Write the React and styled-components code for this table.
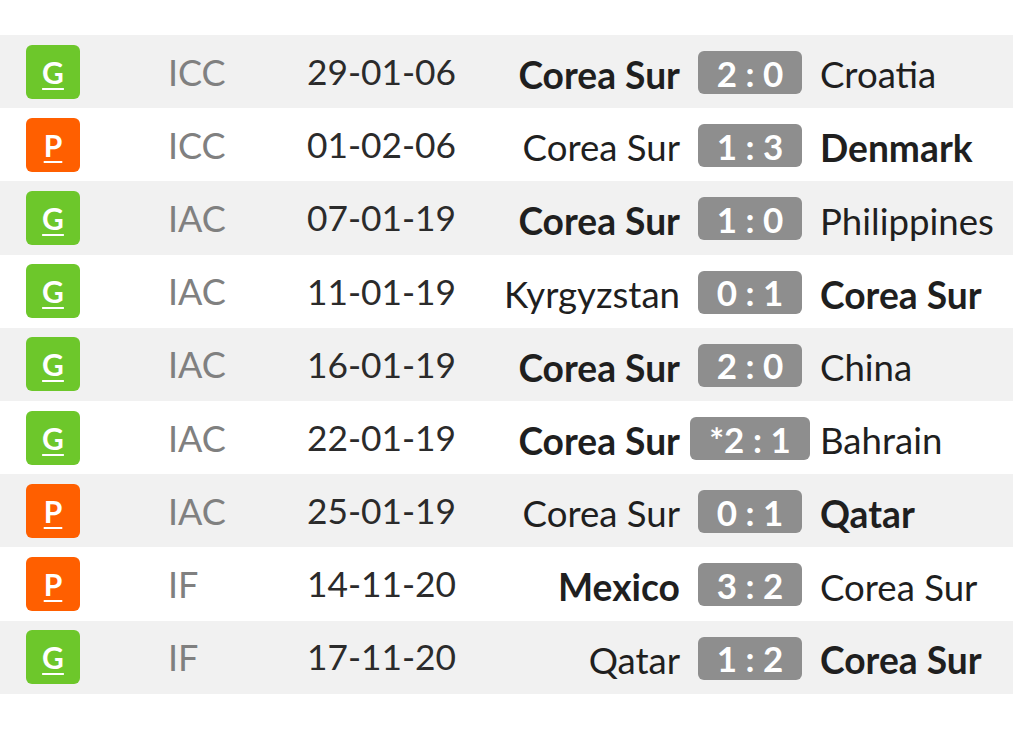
import React from 'react';
import styled, { createGlobalStyle } from 'styled-components';

const GlobalStyle = createGlobalStyle`
  body {
    margin: 0;
    background: #ffffff;
    font-family: Lato, "Open Sans", sans-serif;
  }
`;

const matches = [
  { res: 'G', comp: 'ICC', date: '29-01-06', home: 'Corea Sur', score: '2 : 0', away: 'Croatia', win: 'home' },
  { res: 'P', comp: 'ICC', date: '01-02-06', home: 'Corea Sur', score: '1 : 3', away: 'Denmark', win: 'away' },
  { res: 'G', comp: 'IAC', date: '07-01-19', home: 'Corea Sur', score: '1 : 0', away: 'Philippines', win: 'home' },
  { res: 'G', comp: 'IAC', date: '11-01-19', home: 'Kyrgyzstan', score: '0 : 1', away: 'Corea Sur', win: 'away' },
  { res: 'G', comp: 'IAC', date: '16-01-19', home: 'Corea Sur', score: '2 : 0', away: 'China', win: 'home' },
  { res: 'G', comp: 'IAC', date: '22-01-19', home: 'Corea Sur', score: '*2 : 1', away: 'Bahrain', win: 'home' },
  { res: 'P', comp: 'IAC', date: '25-01-19', home: 'Corea Sur', score: '0 : 1', away: 'Qatar', win: 'away' },
  { res: 'P', comp: 'IF', date: '14-11-20', home: 'Mexico', score: '3 : 2', away: 'Corea Sur', win: 'home' },
  { res: 'G', comp: 'IF', date: '17-11-20', home: 'Qatar', score: '1 : 2', away: 'Corea Sur', win: 'away' },
];

const Table = styled.div`
  padding-top: 35px;
  display: flex;
  flex-direction: column;
`;

const Row = styled.div`
  display: grid;
  grid-template-columns: 142px 139px 190px 183px 140px 1fr;
  align-items: center;
  height: 73.2px;
  padding-left: 26px;
  background: ${(p) => (p.striped ? '#f1f1f1' : '#ffffff')};
`;

const Badge = styled.div`
  width: 54px;
  height: 54px;
  border-radius: 6px;
  display: flex;
  align-items: center;
  justify-content: center;
  background: ${(p) => (p.result === 'G' ? '#6dc72b' : '#ff5f00')};
  color: #ffffff;
  font-size: 30px;
  font-weight: 700;
  text-decoration: underline;
  text-decoration-thickness: 2px;
  text-underline-offset: 4px;
`;

const Comp = styled.div`
  color: #808080;
  font-size: 36px;
  line-height: 1;
`;

const DateCell = styled.div`
  color: #2b2b2b;
  font-size: 35.3px;
  line-height: 1;
`;

const Team = styled.div`
  color: #1f1f1f;
  font-size: ${(p) => (p.bold ? '37.2px' : '36.6px')};
  line-height: 1;
  padding-top: 6px;
  white-space: nowrap;
  font-weight: ${(p) => (p.bold ? 700 : 400)};
  text-align: ${(p) => (p.right ? 'right' : 'left')};
`;

const ScoreCell = styled.div`
  display: flex;
  justify-content: center;
`;

const Score = styled.div`
  height: 43px;
  padding: 0 19px;
  border-radius: 6px;
  background: #8e8e8e;
  color: #ffffff;
  font-size: 35px;
  font-weight: 700;
  display: flex;
  align-items: center;
  justify-content: center;
  white-space: nowrap;
  margin-top: 2px;
`;

export default function App() {
  return (
    <>
      <GlobalStyle />
      <Table>
        {matches.map((m, i) => (
          <Row key={i} striped={i % 2 === 0}>
            <Badge result={m.res}>{m.res}</Badge>
            <Comp>{m.comp}</Comp>
            <DateCell>{m.date}</DateCell>
            <Team right bold={m.win === 'home'}>{m.home}</Team>
            <ScoreCell>
              <Score>{m.score}</Score>
            </ScoreCell>
            <Team bold={m.win === 'away'}>{m.away}</Team>
          </Row>
        ))}
      </Table>
    </>
  );
}
